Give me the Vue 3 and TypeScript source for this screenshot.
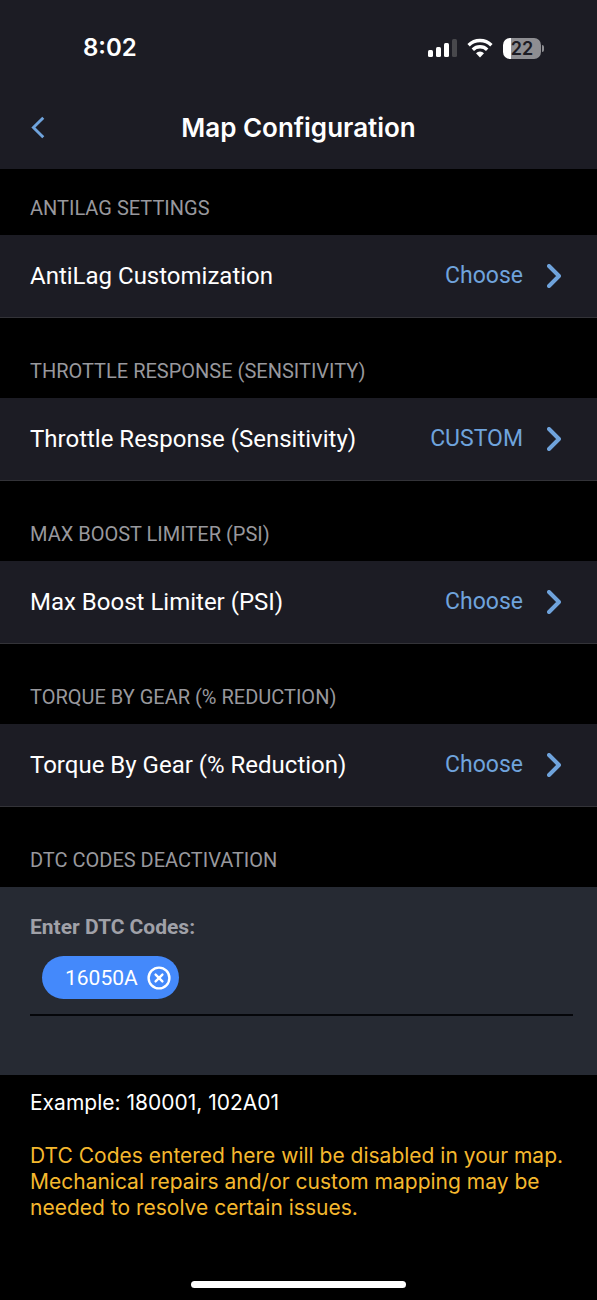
<script setup lang="ts">
import { ref } from 'vue'

interface Setting {
  heading: string
  label: string
  value: string
}

const settings: Setting[] = [
  { heading: 'ANTILAG SETTINGS', label: 'AntiLag Customization', value: 'Choose' },
  { heading: 'THROTTLE RESPONSE (SENSITIVITY)', label: 'Throttle Response (Sensitivity)', value: 'CUSTOM' },
  { heading: 'MAX BOOST LIMITER (PSI)', label: 'Max Boost Limiter (PSI)', value: 'Choose' },
  { heading: 'TORQUE BY GEAR (% REDUCTION)', label: 'Torque By Gear (% Reduction)', value: 'Choose' },
]

const codes = ref<string[]>(['16050A'])
const draft = ref('')

function addCode(): void {
  const code = draft.value.trim().toUpperCase()
  if (code && !codes.value.includes(code)) codes.value.push(code)
  draft.value = ''
}

function removeCode(code: string): void {
  codes.value = codes.value.filter((c) => c !== code)
}
</script>

<template>
  <div class="screen">
    <header class="top">
      <div class="status">
        <span class="clock">8:02</span>
        <div class="indicators">
          <svg class="signal" viewBox="0 0 30 20" aria-hidden="true">
            <rect x="1" y="12" width="5" height="7" rx="1.5" />
            <rect x="9" y="9" width="5" height="10" rx="1.5" />
            <rect x="17" y="5" width="5" height="14" rx="1.5" />
            <rect class="dim" x="25" y="1" width="5" height="18" rx="1.5" />
          </svg>
          <svg class="wifi" viewBox="0 0 26 20" aria-hidden="true">
            <path class="arc" d="M1.6 7.2a16.2 16.2 0 0 1 22.8 0" />
            <path class="arc" d="M5.8 11.8a10.2 10.2 0 0 1 14.4 0" />
            <path d="M13 19.4l-4-4.2a5.8 5.8 0 0 1 8 0z" />
          </svg>
          <div class="battery">
            <span class="cell">22</span>
            <span class="nub"></span>
          </div>
        </div>
      </div>
      <div class="nav">
        <button class="back" type="button" aria-label="Back">
          <svg viewBox="0 0 14 24" aria-hidden="true"><path d="M12.5 1.8L2.2 12l10.3 10.2" /></svg>
        </button>
        <h1 class="title">Map Configuration</h1>
      </div>
    </header>

    <main>
      <section v-for="item in settings" :key="item.heading" class="group">
        <h2 class="heading">{{ item.heading }}</h2>
        <button class="row" type="button">
          <span class="name">{{ item.label }}</span>
          <span class="value">{{ item.value }}</span>
          <svg class="chevron" viewBox="0 0 14 24" aria-hidden="true"><path d="M2 2l10 10L2 22" /></svg>
        </button>
      </section>

      <section class="group">
        <h2 class="heading">DTC CODES DEACTIVATION</h2>
        <div class="panel">
          <label class="label" for="dtc">Enter DTC Codes:</label>
          <div class="tags">
            <span v-for="code in codes" :key="code" class="chip">
              {{ code }}
              <button class="remove" type="button" :aria-label="`Remove ${code}`" @click="removeCode(code)">
                <svg viewBox="0 0 24 24" aria-hidden="true">
                  <circle cx="12" cy="12" r="10.4" />
                  <path d="M8.6 8.6l6.8 6.8M15.4 8.6l-6.8 6.8" />
                </svg>
              </button>
            </span>
            <input id="dtc" v-model="draft" class="entry" type="text" autocomplete="off" @keydown.enter="addCode" />
          </div>
        </div>
      </section>

      <div class="notes">
        <p class="example">Example: 180001, 102A01</p>
        <p class="warning">
          DTC Codes entered here will be disabled in your map. Mechanical repairs and/or custom mapping may be needed to
          resolve certain issues.
        </p>
      </div>
    </main>

    <footer class="home"><span class="bar"></span></footer>
  </div>
</template>

<style>
body {
  margin: 0;
  background: #000;
}
</style>

<style scoped>
.screen {
  display: flex;
  flex-direction: column;
  min-height: 100vh;
  background: #000;
  color: #fff;
  font-family: Roboto, "Noto Sans", sans-serif;
}

button {
  margin: 0;
  padding: 0;
  border: 0;
  background: none;
  color: inherit;
  font: inherit;
  cursor: pointer;
}

.top {
  background: #1c1c24;
  font-family: Inter, sans-serif;
}

.status {
  display: flex;
  align-items: center;
  justify-content: space-between;
  height: 86px;
  padding: 10px 53px 0 83px;
  box-sizing: border-box;
}

.clock {
  font-size: 24px;
  font-weight: 600;
  line-height: 32px;
}

.indicators {
  display: flex;
  align-items: center;
  gap: 10px;
}

.signal {
  width: 30px;
  height: 20px;
  fill: #fff;
}

.dim {
  fill: #48484c;
}

.wifi {
  width: 26px;
  height: 20px;
  fill: #fff;
}

.arc {
  fill: none;
  stroke: #fff;
  stroke-width: 3.4;
}

.battery {
  display: flex;
  align-items: center;
  gap: 1px;
}

.cell {
  width: 38px;
  border-radius: 7px;
  background: linear-gradient(to right, #fff 22%, #8e8e92 22%);
  color: #1c1c24;
  font-size: 18px;
  font-weight: 600;
  line-height: 21px;
  text-align: center;
}

.nub {
  width: 2px;
  height: 7px;
  border-radius: 0 2px 2px 0;
  background: #8e8e92;
}

.nav {
  display: grid;
  grid-template-columns: 48px 1fr 48px;
  align-items: center;
  height: 83px;
  padding: 0 14px;
}

.back {
  display: flex;
  align-items: center;
  height: 48px;
  padding-left: 17px;
}

.back svg {
  width: 14px;
  height: 23px;
}

.back path,
.chevron path {
  fill: none;
  stroke: #6fa3dc;
  stroke-width: 3;
}

.title {
  margin: 0;
  font-size: 26px;
  font-weight: 600;
  line-height: 32px;
  text-align: center;
}

.heading {
  margin: 0;
  padding: 41px 30px 15px;
  color: #98989d;
  font-size: 20px;
  font-weight: 400;
  line-height: 24px;
}

.group:first-child .heading {
  padding-top: 27px;
}

.row {
  display: flex;
  align-items: center;
  width: 100%;
  height: 83px;
  padding: 0 36px 0 30px;
  border-bottom: 1px solid #333338;
  background: #1c1c24;
  font-size: 24px;
  line-height: 32px;
  text-align: left;
}

.name {
  flex: 1;
}

.value {
  color: #6fa3dc;
  font-size: 23px;
}

.chevron {
  width: 14px;
  height: 24px;
  margin-left: 24px;
}

.chevron path {
  stroke-width: 4;
  stroke-linecap: round;
  stroke-linejoin: round;
}

.panel {
  padding: 28px 24px 59px 30px;
  background: #262a33;
}

.label {
  display: block;
  color: #a0a1a8;
  font-size: 21px;
  font-weight: 700;
  line-height: 24px;
}

.tags {
  display: flex;
  flex-wrap: wrap;
  align-items: center;
  gap: 12px;
  padding: 17px 12px 15px;
  border-bottom: 2px solid #05060a;
}

.chip {
  display: flex;
  align-items: center;
  gap: 9px;
  height: 43px;
  padding: 0 8px 0 23px;
  border-radius: 22px;
  background: #4489fb;
  font-size: 21px;
}

.remove {
  display: flex;
}

.remove svg {
  width: 24px;
  height: 24px;
  fill: none;
  stroke: #fff;
  stroke-width: 2.4;
  stroke-linecap: round;
}

.entry {
  flex: 1;
  min-width: 80px;
  height: 40px;
  padding: 0;
  border: 0;
  outline: 0;
  background: transparent;
  color: #fff;
  font: inherit;
  font-size: 21px;
}

.notes {
  padding: 15px 24px 24px 30px;
  font-family: Inter, sans-serif;
  font-size: 21px;
  line-height: 26px;
}

.example,
.warning {
  margin: 0;
}

.warning {
  margin-top: 27px;
  color: #f5b82e;
}

.home {
  display: flex;
  justify-content: center;
  margin-top: auto;
  padding-bottom: 12px;
}

.bar {
  width: 36%;
  height: 7px;
  border-radius: 4px;
  background: #fff;
}
</style>
